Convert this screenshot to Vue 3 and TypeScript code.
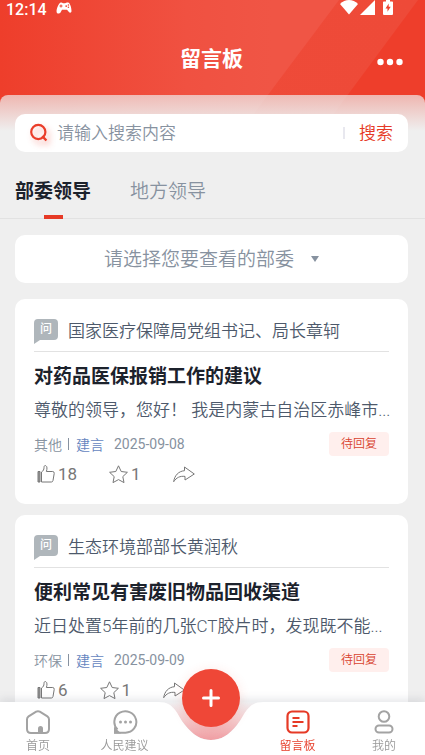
<script setup lang="ts">
import { ref } from 'vue'

interface Message {
  id: number
  target: string
  title: string
  excerpt: string
  field: string
  kind: string
  date: string
  status: string
  likes: number
  stars: number
}

const tabs: string[] = ['部委领导', '地方领导']
const activeTab = ref<number>(0)
const keyword = ref<string>('')
const ministry = ref<string>('')

const messages: Message[] = [
  {
    id: 1,
    target: '国家医疗保障局党组书记、局长章轲',
    title: '对药品医保报销工作的建议',
    excerpt: '尊敬的领导，您好！ 我是内蒙古自治区赤峰市...',
    field: '其他',
    kind: '建言',
    date: '2025-09-08',
    status: '待回复',
    likes: 18,
    stars: 1,
  },
  {
    id: 2,
    target: '生态环境部部长黄润秋',
    title: '便利常见有害废旧物品回收渠道',
    excerpt: '近日处置5年前的几张CT胶片时，发现既不能...',
    field: '环保',
    kind: '建言',
    date: '2025-09-09',
    status: '待回复',
    likes: 6,
    stars: 1,
  },
]
</script>

<template>
  <div class="app">
    <div class="backdrop" aria-hidden="true">
      <svg viewBox="0 0 425 135" preserveAspectRatio="none">
        <defs>
          <linearGradient id="warm" x1="0" x2="1" y1="0" y2="0">
            <stop offset="0" stop-color="#ee3e2b" />
            <stop offset="0.55" stop-color="#f05141" />
            <stop offset="0.8" stop-color="#f05545" />
          </linearGradient>
          <linearGradient id="band" x1="0" x2="1" y1="0" y2="0">
            <stop offset="0" stop-color="#ef4b39" />
            <stop offset="1" stop-color="#ee4a38" />
          </linearGradient>
        </defs>
        <rect width="425" height="135" fill="#ee3e2b" />
        <path d="M0 0H418L318 135H0z" fill="url(#band)" />
        <path d="M0 0H339L238 135H0z" fill="url(#warm)" />
      </svg>
    </div>

    <header class="header">
      <div class="status">
        <span class="clock">12:14</span>
        <svg class="pad" viewBox="0 0 16 12" width="16" height="12">
          <path d="M4.3.8C5.5.2 6.2.9 7 1.3h2.200C10 .9 11.500.1 12.700.8c1.800 1.200 2.900 6 2.800 8.500-.1 1.700-1.800 1.800-2.800.5L11 7.800H6L4.500 10.400c-1 1.500-3.600 1.700-3.900-.5C.3 7.300 2.300 1.900 4.300.8z" fill="#fff" />
          <path d="M3.500 4h3M5 2.500v3" stroke="#ee4230" stroke-width="1" />
          <circle cx="10.200" cy="4.100" r=".9" fill="#ee4230" />
          <circle cx="12.400" cy="3" r=".8" fill="#ee4230" />
          <circle cx="12.400" cy="5.200" r=".8" fill="#ee4230" />
        </svg>
        <span class="grow"></span>
        <svg viewBox="0 0 18 15" width="18" height="15"><path d="M0 4C5-1.300 13-1.300 18 4L9 14.500z" fill="#fff" /></svg>
        <svg viewBox="0 0 15 15" width="15" height="15"><path d="M15 0v15H0z" fill="#fff" /></svg>
        <svg class="battery" viewBox="0 0 10 15" width="10" height="15">
          <path d="M3 0h4v1.500h2.200q.8 0 .8.800V14q0 1-1 1H1q-1 0-1-1V2.300q0-.8.8-.8H3z" fill="#fff" />
          <path d="M5.700 3.500 2.500 8.400h2v3.400l3.200-5H5.700z" fill="#ee4230" />
        </svg>
      </div>
      <div class="titlebar">
        <h1>留言板</h1>
        <button class="more" type="button" aria-label="更多">
          <svg viewBox="0 0 26 8" width="26" height="8" fill="#fff">
            <circle cx="3.500" cy="4" r="3.200" /><circle cx="13" cy="4" r="3.200" /><circle cx="22.500" cy="4" r="3.200" />
          </svg>
        </button>
      </div>
    </header>

    <main class="panel">
      <form class="search" @submit.prevent>
        <svg class="lens" viewBox="0 0 20 20" width="20" height="20" fill="none" stroke="#ea3d2a">
          <circle cx="9.300" cy="9" r="7.100" stroke-width="2.200" />
          <path d="m13.200 13.200 4.200 4.300" stroke-width="2.400" />
        </svg>
        <input v-model="keyword" type="text" aria-label="请输入搜索内容" placeholder="请输入搜索内容" />
        <span class="bar"></span>
        <button type="submit">搜索</button>
      </form>

      <nav class="tabs">
        <button
          v-for="(tab, i) in tabs"
          :key="tab"
          type="button"
          :class="{ active: i === activeTab }"
          @click="activeTab = i"
        >{{ tab }}</button>
      </nav>

      <div class="picker">
        <select v-model="ministry" aria-label="请选择您要查看的部委">
          <option value="">请选择您要查看的部委</option>
        </select>
        <svg viewBox="0 0 8 6" width="8" height="6"><path d="M0 0h8L4 6z" fill="#8792a0" /></svg>
      </div>

      <div class="list">
        <article v-for="m in messages" :key="m.id" class="card">
          <div class="head">
            <span class="ask">
              <svg viewBox="0 0 24 25" width="24" height="25" aria-hidden="true">
                <path d="M4 0h16q4 0 4 4v13q0 4-4 4H6l-6 4V4q0-4 4-4z" fill="#afb6bb" />
              </svg>
              <b>问</b>
            </span>
            <span class="target">{{ m.target }}</span>
          </div>
          <h2>{{ m.title }}</h2>
          <p class="excerpt">{{ m.excerpt }}</p>
          <div class="meta">
            <span>{{ m.field }}</span>
            <i></i>
            <span class="kind">{{ m.kind }}</span>
            <time>{{ m.date }}</time>
            <span class="state">{{ m.status }}</span>
          </div>
          <div class="actions">
            <button type="button" aria-label="点赞">
              <svg viewBox="0 0 18 18" width="18" height="18" fill="none" stroke="#777" stroke-width="1">
                <path d="M1 6.500h2v10.500H1z" fill="#999" />
                <path d="M4.500 7C6.300 6 7 4.500 7 2.500 7 .6 8 .3 8.800.7c1.500.7 1.400 3.200.6 5.800h6.300q1.800.2 1.500 2l-1.200 7q-.3 1.500-1.600 1.500H4.500z" />
              </svg>
              {{ m.likes }}
            </button>
            <button type="button" aria-label="收藏">
              <svg class="star" viewBox="0 0 19 18" width="19" height="18" fill="none" stroke="#777" stroke-width="1" stroke-linejoin="round">
                <path d="m9.500.8 2.700 5.700 6.200.8-4.600 4.300 1.200 6-5.500-3-5.500 3 1.200-6L.6 7.300l6.200-.8z" />
              </svg>
              {{ m.stars }}
            </button>
            <button type="button" aria-label="分享">
              <svg viewBox="0 0 22 17" width="22" height="17" fill="none" stroke="#777" stroke-width="1" stroke-linejoin="round">
                <path d="M11.500 1 21.300 8l-9.300 6v-3.600C7 9.800 3.500 11.500.7 15.700 1.500 9.500 5.500 5.200 11.500 4.700z" />
              </svg>
            </button>
          </div>
        </article>
      </div>
    </main>

    <footer class="dock">
      <div class="dock-bg" aria-hidden="true">
        <div class="side"></div>
        <svg class="notch" viewBox="0 0 120 53" width="120" height="53">
          <defs>
            <linearGradient id="glow" x1="0" x2="0" y1="0" y2="1">
              <stop offset="0" stop-color="#eeeff1" />
              <stop offset="0.45" stop-color="#f4d0d2" />
              <stop offset="1" stop-color="#f09ea3" />
            </linearGradient>
          </defs>
          <path d="M10 0C22 2 26 13 34 23 42 33 50 38 60 38S78 33 86 23C94 13 98 2 110 0z" fill="url(#glow)" />
          <path d="M0 0H8C24 0 26 13 34 23 42 33 50 38 60 38S78 33 86 23C94 13 96 0 112 0H120V53H0z" fill="#fff" />
        </svg>
        <div class="side right"></div>
      </div>
      <nav class="dock-items">
        <a href="#home">
          <svg viewBox="0 0 26 26" width="26" height="26" fill="none" stroke="#a3a3a3" stroke-width="2">
            <path d="M11.200 2.700 3.600 7.400Q2 8.500 2 10.300V20q0 4 4 4h14q4 0 4-4v-9.700q0-1.800-1.600-2.900l-7.600-4.700q-1.800-1-3.600 0z" />
            <path d="M13 24v-4.500a2.500 2.500 0 0 1 5 0V24z" fill="#a3a3a3" stroke="none" />
          </svg>
          首页
        </a>
        <a href="#advice">
          <svg viewBox="0 0 26 26" width="26" height="26" fill="none" stroke="#a3a3a3" stroke-width="2">
            <path d="M5.500 20.500A11 10.700 0 1 1 13.500 23.700H3V18.500" />
            <path d="M2.200 18v6.500h7z" fill="#a3a3a3" stroke="none" />
            <g fill="#a3a3a3" stroke="none"><circle cx="8.500" cy="13" r="1.500" /><circle cx="13.500" cy="13" r="1.500" /><circle cx="18.500" cy="13" r="1.500" /></g>
          </svg>
          人民建议
        </a>
        <button class="fab" type="button" aria-label="发布">
          <svg viewBox="0 0 18 18" width="18" height="18" stroke="#fff" stroke-width="3" stroke-linecap="round"><path d="M9 1.500v15M1.500 9h15" /></svg>
        </button>
        <a href="#board" class="current">
          <svg viewBox="0 0 26 26" width="26" height="26" fill="none" stroke="#e63a26" stroke-width="2.200">
            <rect x="2.500" y="2.500" width="21" height="21" rx="4.500" />
            <path d="M7.500 9h7M7.500 13h11M7.500 17h5" stroke-width="2" />
          </svg>
          留言板
        </a>
        <a href="#me">
          <svg viewBox="0 0 26 26" width="26" height="26" fill="none" stroke="#a3a3a3" stroke-width="2">
            <circle cx="13" cy="7.500" r="5.300" />
            <rect x="4.500" y="16.500" width="17" height="7" rx="3.500" />
          </svg>
          我的
        </a>
      </nav>
    </footer>
  </div>
</template>

<style>
body {
  background: #efefef;
}
</style>

<style scoped>
.app,
.app * {
  box-sizing: border-box;
}
.app {
  position: relative;
  display: flex;
  flex-direction: column;
  height: 100vh;
  overflow: hidden;
  background: #efefef;
  font-family: Roboto, "Noto Sans CJK SC", sans-serif;
  font-weight: 350;
  color: #4d596b;
}
button,
input,
select {
  margin: 0;
  padding: 0;
  border: 0;
  background: none;
  font: inherit;
  color: inherit;
}
svg {
  display: block;
  flex: none;
}
h1,
h2,
p {
  margin: 0;
}
.backdrop {
  position: absolute;
  top: 0;
  left: 0;
  right: 0;
  height: 135px;
}
.backdrop svg {
  width: 100%;
  height: 100%;
}
.header {
  position: relative;
  color: #fff;
}
.status {
  display: flex;
  align-items: flex-start;
  height: 20px;
  padding: 0 32px 0 6px;
  gap: 2px;
}
.clock {
  font-size: 16px;
  line-height: 19px;
  font-weight: 500;
}
.pad {
  margin: 2px 0 0 7px;
}
.grow {
  flex: 1;
}
.battery {
  margin-left: 6px;
}
.titlebar {
  display: grid;
  grid-template-columns: 1fr auto 1fr;
  align-items: center;
  height: 75px;
  padding: 8px 22px 0 20px;
}
h1 {
  grid-column: 2;
  font-size: 21px;
  line-height: 28px;
  font-weight: 700;
  padding-bottom: 5px;
}
.more {
  justify-self: end;
  padding: 12px 0;
}
.panel {
  position: relative;
  display: flex;
  flex-direction: column;
  flex: 1;
  min-height: 0;
  padding-top: 19px;
  border-radius: 8px 8px 0 0;
  background: linear-gradient(rgba(239, 239, 239, 0.68), #efefef 36px);
}
.search {
  display: flex;
  align-items: center;
  flex: none;
  height: 38px;
  margin: 0 17px 0 15px;
  padding: 0 15px 0 14px;
  border-radius: 10px;
  background: #fff;
  font-size: 17px;
}
.lens {
  filter: drop-shadow(3px 4px 3px rgba(234, 61, 42, 0.4));
}
.search input {
  flex: 1;
  min-width: 0;
  margin-left: 8px;
  outline: none;
  height: 26px;
}
.search input::placeholder {
  color: #8792a0;
  opacity: 1;
}
.bar {
  width: 2px;
  height: 12px;
  margin-right: 14px;
  background: #e8e8ef;
}
.search button {
  line-height: 24px;
  color: #e63a26;
}
.tabs {
  display: flex;
  flex: none;
  gap: 39px;
  height: 67px;
  padding: 9px 15px 0;
  border-bottom: 1px solid #e2e2e2;
}
.tabs button {
  position: relative;
  font-size: 19px;
  color: #8792a0;
}
.tabs .active {
  font-weight: 700;
  color: #1c222c;
}
.tabs .active::after {
  content: "";
  position: absolute;
  left: 50%;
  bottom: -1px;
  width: 19px;
  height: 4px;
  margin-left: -9px;
  background: #e63a26;
}
.picker {
  display: flex;
  align-items: center;
  justify-content: center;
  flex: none;
  gap: 16px;
  height: 48px;
  margin: 16px 17px 0 15px;
  border-radius: 10px;
  background: #fff;
  font-size: 19px;
  color: #8792a0;
}
select {
  appearance: none;
  outline: none;
  padding-top: 2px;
  line-height: 28px;
}
.list {
  display: flex;
  flex-direction: column;
  flex: 1;
  gap: 11px;
  min-height: 0;
  margin-top: 16px;
  padding: 0 17px 80px 15px;
  overflow-y: auto;
  scrollbar-width: none;
}
.card {
  flex: none;
  padding: 16px 19px 18px;
  border-radius: 10px;
  background: #fff;
}
.head {
  display: flex;
  align-items: center;
  gap: 10px;
  height: 37px;
  padding-bottom: 4px;
  border-bottom: 1px solid #e2e2e2;
}
.ask {
  position: relative;
  color: #fff;
}
.ask b {
  position: absolute;
  top: 0;
  left: 0;
  width: 24px;
  font-size: 12px;
  line-height: 21px;
  font-weight: 500;
  text-align: center;
}
.target {
  font-size: 17px;
  line-height: 32px;
  white-space: nowrap;
}
h2 {
  padding-top: 2px;
  font-size: 19px;
  line-height: 46px;
  font-weight: 700;
  color: #1c222c;
  white-space: nowrap;
}
.excerpt {
  font-size: 17px;
  line-height: 20px;
  white-space: nowrap;
}
.meta {
  display: flex;
  align-items: center;
  height: 24px;
  margin-top: 12px;
  font-size: 14px;
  color: #8792a0;
}
.meta i {
  width: 1px;
  height: 12px;
  margin: 0 7px 0 6px;
  background: #8792a0;
}
.kind {
  color: #6585c0;
}
time {
  margin-left: 10px;
  font-weight: 400;
}
.state {
  margin-left: auto;
  width: 60px;
  border-radius: 4px;
  background: #ffefed;
  font-size: 12px;
  line-height: 24px;
  text-align: center;
  color: #d8432f;
}
.actions {
  display: flex;
  align-items: center;
  gap: 32px;
  height: 24px;
  margin-top: 6px;
  padding-left: 3px;
}
.actions button {
  display: flex;
  align-items: center;
  gap: 3px;
  font-size: 17px;
  line-height: 24px;
  font-weight: 400;
  color: #777;
}
.dock {
  position: fixed;
  left: 0;
  right: 0;
  bottom: 0;
  height: 53px;
}
.dock-bg {
  position: absolute;
  inset: 0;
  display: flex;
  filter: drop-shadow(0 -3px 4px rgba(50, 60, 80, 0.12));
}
.side {
  flex: 1;
  background: #fff;
}
.right {
  padding-right: 3px;
}
.dock-items {
  position: relative;
  display: flex;
  justify-content: space-between;
  padding: 7px 13px 0 10px;
}
.dock-items a {
  display: flex;
  flex-direction: column;
  align-items: center;
  width: 56px;
  gap: 2px;
  font-size: 12px;
  line-height: 18px;
  white-space: nowrap;
  text-decoration: none;
  color: #999;
}
.dock-items .current {
  color: #e63a26;
}
.fab {
  display: flex;
  align-items: center;
  justify-content: center;
  width: 58px;
  height: 58px;
  margin: -40px -1px 0;
  border-radius: 50%;
  background: #ef4737;
  box-shadow: 0 2px 12px rgba(239, 71, 55, 0.15);
}
</style>
